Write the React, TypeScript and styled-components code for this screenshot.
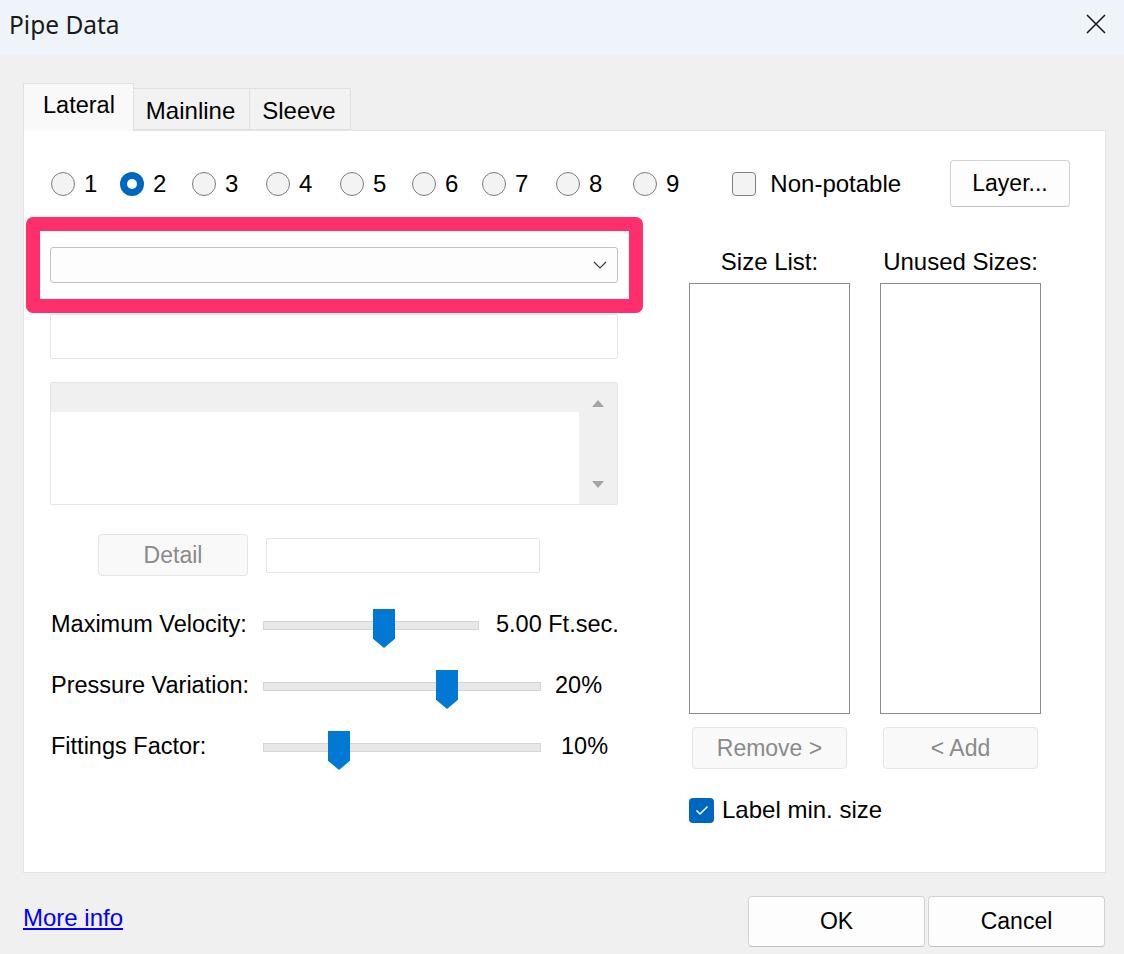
import React from "react";
import styled, { createGlobalStyle } from "styled-components";

const GlobalStyle = createGlobalStyle`
  html, body { margin: 0; padding: 0; background: #f0f0f0; }
  * { box-sizing: border-box; }
`;

const Window = styled.div`
  width: 1124px;
  height: 954px;
  display: flex;
  flex-direction: column;
  background: #f0f0f0;
  font-family: "Liberation Sans", Arial, sans-serif;
  color: #000;
  overflow: hidden;
`;

const TitleBar = styled.div`
  height: 55px;
  flex: none;
  display: flex;
  align-items: center;
  justify-content: space-between;
  padding: 0 18px 0 9px;
  background: #eff4fa;
`;

const Title = styled.div`
  font-family: "Noto Sans", "Open Sans", sans-serif;
  font-size: 24.5px;
  color: #1a1a1a;
  margin-top: -6px;
`;

const CloseIcon = styled.svg`
  width: 20px;
  height: 20px;
  margin-top: -8px;
`;

const Body = styled.div`
  flex: 1;
  display: flex;
  flex-direction: column;
  padding: 28px 18px 0 23px;
`;

const TabStrip = styled.div`
  height: 47px;
  display: flex;
  align-items: flex-end;
  position: relative;
  z-index: 1;
`;

const Tab = styled.div<{ $active?: boolean }>`
  display: flex;
  align-items: center;
  font-size: 24px;
  border: 1px solid #e0e0e0;
  border-bottom: none;
  ${(p) =>
    p.$active
      ? `
    font-size: 23.5px;
    height: 48px;
    margin-bottom: -1px;
    padding: 0 18px 4px 19px;
    background: #f9f9f9;
  `
      : `
    height: 42px;
    padding: 3px 14px 0 12px;
    background: #f2f2f2;
    border-left: none;
    border-bottom: 1px solid #e0e0e0;
  `}
`;

const Panel = styled.div`
  height: 743px;
  flex: none;
  background: #fff;
  border: 1px solid #e3e3e3;
  padding: 29px 35px 0 26px;
  display: flex;
  flex-direction: column;
`;

const TopRow = styled.div`
  height: 47px;
  display: flex;
  align-items: center;
`;

const RadioGroup = styled.div`
  display: flex;
  align-items: center;
  margin-left: 1px;
`;

const RadioItem = styled.label<{ $w?: number }>`
  display: flex;
  align-items: center;
  gap: 9px;
  font-size: 24px;
  ${(p) => (p.$w ? `width: ${p.$w}px;` : "")}
`;

const RadioCircle = styled.span<{ $checked?: boolean }>`
  width: 24px;
  height: 24px;
  border-radius: 50%;
  flex: none;
  display: flex;
  align-items: center;
  justify-content: center;
  ${(p) =>
    p.$checked
      ? `
    background: #0067c0;
    &::after {
      content: "";
      width: 10px;
      height: 10px;
      border-radius: 50%;
      background: #fff;
    }
  `
      : `
    background: #f3f3f3;
    border: 1.5px solid #7d7d7d;
  `}
`;

const CheckItem = styled.label<{ $ml?: number; $gap: number }>`
  display: flex;
  align-items: center;
  gap: ${(p) => p.$gap}px;
  font-size: 24px;
  margin-left: ${(p) => p.$ml ?? 0}px;
`;

const CheckBox = styled.span<{ $checked?: boolean }>`
  width: 24px;
  height: 24px;
  flex: none;
  border-radius: 4px;
  display: flex;
  align-items: center;
  justify-content: center;
  ${(p) =>
    p.$checked
      ? `
    width: 25px;
    height: 25px;
    background: #0067c0;
  `
      : `
    background: #f3f3f3;
    border: 1.5px solid #7d7d7d;
  `}
`;

const Button = styled.button<{ $w: number; $h: number; $disabled?: boolean }>`
  width: ${(p) => p.$w}px;
  height: ${(p) => p.$h}px;
  flex: none;
  font-family: "Liberation Sans", Arial, sans-serif;
  font-size: 23px;
  border-radius: 4px;
  padding: 0;
  ${(p) =>
    p.$disabled
      ? `
    background: #f9f9f9;
    border: 1px solid #e5e5e5;
    color: #8a8a8a;
  `
      : `
    background: #fdfdfd;
    border: 1px solid #d3d3d3;
    border-bottom-color: #c2c2c2;
    color: #000;
  `}
`;

const LayerButton = styled(Button)`
  margin-left: auto;
`;

const Columns = styled.div`
  display: flex;
  gap: 71px;
  margin-top: 33px;
`;

const LeftCol = styled.div`
  width: 568px;
  padding-top: 7px;
  display: flex;
  flex-direction: column;
`;

const DropdownSlot = styled.div`
  position: relative;
`;

const Dropdown = styled.div`
  height: 36px;
  background: #fdfdfd;
  border: 1px solid #c2c2c2;
  border-radius: 3px;
  display: flex;
  align-items: center;
  justify-content: flex-end;
  padding-right: 10px;
`;

const Highlight = styled.div`
  position: absolute;
  top: -30px;
  left: -24px;
  right: -25px;
  bottom: -30px;
  border: 14px solid #ff2f6d;
  border-radius: 7px;
  pointer-events: none;
`;

const TextBox = styled.div<{ $w?: number; $h: number }>`
  ${(p) => (p.$w ? `width: ${p.$w}px;` : "")}
  height: ${(p) => p.$h}px;
  background: #fff;
  border: 1px solid #e5e5e5;
  border-radius: 2px;
`;

const NameBox = styled(TextBox)`
  margin-top: 31px;
`;

const ListBox = styled.div`
  margin-top: 23px;
  height: 123px;
  border: 1px solid #e5e5e5;
  border-radius: 2px;
  display: flex;
`;

const ListRows = styled.div`
  flex: 1;
`;

const SelectedRow = styled.div`
  height: 29px;
  background: #f0f0f0;
`;

const ScrollBar = styled.div`
  width: 38px;
  background: #f0f0f0;
  display: flex;
  flex-direction: column;
  align-items: center;
  justify-content: space-between;
  padding: 17px 0 16px;
`;

const Arrow = styled.span<{ $down?: boolean }>`
  width: 0;
  height: 0;
  border-left: 6px solid transparent;
  border-right: 6px solid transparent;
  ${(p) =>
    p.$down
      ? `border-top: 7px solid #a3a3a3;`
      : `border-bottom: 7px solid #a3a3a3;`}
`;

const DetailRow = styled.div`
  display: flex;
  align-items: center;
  gap: 18px;
  margin-top: 29px;
  padding-left: 48px;
`;

const Sliders = styled.div`
  display: flex;
  flex-direction: column;
  gap: 21px;
  margin-top: 28px;
`;

const SliderRow = styled.div`
  height: 40px;
  display: flex;
  align-items: center;
  font-size: 23.5px;
`;

const SliderLabel = styled.span`
  width: 213px;
  padding-left: 1px;
  flex: none;
`;

const Track = styled.div<{ $w: number }>`
  position: relative;
  width: ${(p) => p.$w}px;
  height: 9px;
  flex: none;
  background: #e6e7e8;
  border: 1px solid #d5d5d5;
  margin-top: 3px;
`;

const Thumb = styled.div`
  position: absolute;
  top: -13px;
  width: 22px;
  height: 39px;
  background: #0078d4;
  clip-path: polygon(0 0, 100% 0, 100% 76%, 50% 100%, 0 76%);
`;

const SliderValue = styled.span<{ $ml: number }>`
  margin-left: ${(p) => p.$ml}px;
  white-space: nowrap;
`;

const RightCol = styled.div`
  width: 352px;
  display: flex;
  flex-direction: column;
`;

const ListsRow = styled.div`
  display: flex;
  gap: 30px;
`;

const ListColumn = styled.div`
  width: 161px;
  display: flex;
  flex-direction: column;
  align-items: center;
`;

const ListLabel = styled.div`
  margin-top: 8px;
  height: 28px;
  line-height: 28px;
  font-size: 24px;
  white-space: nowrap;
`;

const SizeBox = styled.div`
  margin-top: 7px;
  width: 161px;
  height: 431px;
  background: #fff;
  border: 1px solid #8a8a90;
`;

const ListButton = styled(Button)`
  margin-top: 13px;
`;

const LabelCheck = styled(CheckItem)`
  margin-top: 27px;
`;

const Footer = styled.div`
  flex: 1;
  display: flex;
  align-items: flex-start;
  padding: 23px 1px 0 0;
`;

const MoreInfo = styled.a`
  margin-top: 8px;
  font-size: 24px;
  line-height: 28px;
  color: #0000ff;
  text-decoration: underline;
  cursor: pointer;
`;

const ButtonGroup = styled.div`
  margin-left: auto;
  display: flex;
  gap: 3px;
`;

const radios = [
  { n: "1", w: 69 },
  { n: "2", w: 72, checked: true },
  { n: "3", w: 74 },
  { n: "4", w: 74 },
  { n: "5", w: 72 },
  { n: "6", w: 70 },
  { n: "7", w: 74 },
  { n: "8", w: 77 },
  { n: "9" },
];

const sliders = [
  { label: "Maximum Velocity:", w: 216, pct: 0.56, value: "5.00 Ft.sec.", ml: 17 },
  { label: "Pressure Variation:", w: 278, pct: 0.67, value: "20%", ml: 14 },
  { label: "Fittings Factor:", w: 278, pct: 0.25, value: "10%", ml: 20 },
];

export default function App() {
  return (
    <>
      <GlobalStyle />
      <Window>
        <TitleBar>
          <Title>Pipe Data</Title>
          <CloseIcon viewBox="0 0 20 20">
            <path d="M1 1 L19 19 M19 1 L1 19" stroke="#1a1a1a" strokeWidth="1.6" fill="none" />
          </CloseIcon>
        </TitleBar>
        <Body>
          <TabStrip>
            <Tab $active>Lateral</Tab>
            <Tab>Mainline</Tab>
            <Tab>Sleeve</Tab>
          </TabStrip>
          <Panel>
            <TopRow>
              <RadioGroup>
                {radios.map((r) => (
                  <RadioItem key={r.n} $w={r.w}>
                    <RadioCircle $checked={r.checked} />
                    {r.n}
                  </RadioItem>
                ))}
              </RadioGroup>
              <CheckItem $ml={53} $gap={14}>
                <CheckBox />
                Non-potable
              </CheckItem>
              <LayerButton $w={120} $h={47}>Layer...</LayerButton>
            </TopRow>
            <Columns>
              <LeftCol>
                <DropdownSlot>
                  <Dropdown>
                    <svg width="14" height="8" viewBox="0 0 14 8">
                      <path d="M1 1 L7 7 L13 1" stroke="#3a3a3a" strokeWidth="1.2" fill="none" />
                    </svg>
                  </Dropdown>
                  <Highlight />
                </DropdownSlot>
                <NameBox $h={45} />
                <ListBox>
                  <ListRows>
                    <SelectedRow />
                  </ListRows>
                  <ScrollBar>
                    <Arrow />
                    <Arrow $down />
                  </ScrollBar>
                </ListBox>
                <DetailRow>
                  <Button $w={150} $h={42} $disabled>Detail</Button>
                  <TextBox $w={274} $h={35} />
                </DetailRow>
                <Sliders>
                  {sliders.map((s) => (
                    <SliderRow key={s.label}>
                      <SliderLabel>{s.label}</SliderLabel>
                      <Track $w={s.w}>
                        <Thumb style={{ left: `${Math.round(s.pct * (s.w - 22))}px` }} />
                      </Track>
                      <SliderValue $ml={s.ml}>{s.value}</SliderValue>
                    </SliderRow>
                  ))}
                </Sliders>
              </LeftCol>
              <RightCol>
                <ListsRow>
                  <ListColumn>
                    <ListLabel>Size List:</ListLabel>
                    <SizeBox />
                    <ListButton $w={155} $h={42} $disabled>Remove &gt;</ListButton>
                  </ListColumn>
                  <ListColumn>
                    <ListLabel>Unused Sizes:</ListLabel>
                    <SizeBox />
                    <ListButton $w={155} $h={42} $disabled>&lt; Add</ListButton>
                  </ListColumn>
                </ListsRow>
                <LabelCheck $gap={8}>
                  <CheckBox $checked>
                    <svg width="14" height="11" viewBox="0 0 14 11">
                      <path d="M1.5 5.5 L5 9 L12.5 1.5" stroke="#fff" strokeWidth="1.5" fill="none" />
                    </svg>
                  </CheckBox>
                  Label min. size
                </LabelCheck>
              </RightCol>
            </Columns>
          </Panel>
          <Footer>
            <MoreInfo>More info</MoreInfo>
            <ButtonGroup>
              <Button $w={177} $h={51}>OK</Button>
              <Button $w={177} $h={51}>Cancel</Button>
            </ButtonGroup>
          </Footer>
        </Body>
      </Window>
    </>
  );
}
